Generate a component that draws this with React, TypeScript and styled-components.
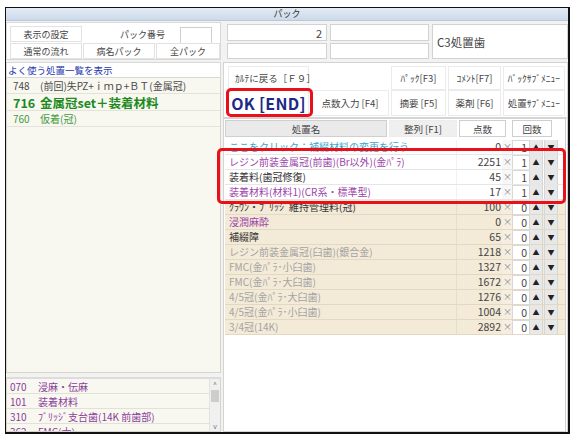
import styled, { createGlobalStyle } from 'styled-components';

const GlobalStyle = createGlobalStyle`
  html, body { margin: 0; padding: 0; background: #fff; }
  body {
    font-family: "Noto Sans CJK JP", "Noto Sans", sans-serif;
    font-size: 10px;
    color: #333;
  }
`;

const Page = styled.div`
  padding: 7px 0 0 5px;
`;

const Window = styled.div`
  position: relative;
  width: 562px;
  height: 424px;
  border: 1px solid #111;
  border-right-width: 2px;
  border-bottom-width: 2px;
  background: #f2f2f2;
  display: flex;
  flex-direction: column;
`;

const TitleBar = styled.div`
  height: 13px;
  background: linear-gradient(#e3ebf5, #cbd9e9);
  border-bottom: 1px solid #b8c8da;
  box-sizing: border-box;
  text-align: center;
  font-size: 9px;
  line-height: 12px;
  color: #333;
`;

const Body = styled.div`
  flex: 1;
  display: flex;
  gap: 2px;
  padding: 1px 0 0 0;
  min-height: 0;
`;

/* ---------- left pane ---------- */

const LeftPane = styled.div`
  width: 215px;
  display: flex;
  flex-direction: column;
`;

const SettingBox = styled.div`
  height: 38px;
  box-sizing: border-box;
  background: #fff;
  border: 1px solid #d8d8d8;
  padding: 3px 0 0 3px;
  display: flex;
  flex-direction: column;
  gap: 1px;
`;

const SettingRow = styled.div`
  display: flex;
  align-items: center;
  gap: 1px;
  height: 16px;
`;

const PlainButton = styled.div<{ $w?: number }>`
  width: ${p => (p.$w ? `${p.$w}px` : 'auto')};
  flex: ${p => (p.$w ? 'none' : '1')};
  height: 100%;
  box-sizing: border-box;
  border: 1px solid #e2e2e2;
  background: #fff;
  display: flex;
  align-items: center;
  justify-content: center;
  padding: 0 5px;
  font-size: 9px;
  color: #444;
  white-space: nowrap;
`;

const PackLabel = styled.div`
  flex: 1;
  text-align: right;
  padding-right: 14px;
  font-size: 9px;
  color: #444;
`;

const PackInput = styled.div`
  width: 32px;
  height: 17px;
  box-sizing: border-box;
  border: 1px solid #cfcfcf;
  margin-right: 8px;
  margin-top: 2px;
  background: #fff;
`;

const LinkBox = styled.div`
  height: 16px;
  margin-top: 2px;
  box-sizing: border-box;
  background: #fff;
  border: 1px solid #d8d8d8;
  padding-left: 1px;
  font-size: 9.5px;
  line-height: 14px;
  color: #2638b0;
`;

const FavList = styled.div`
  flex: 1;
  background: #f8f7f0;
  border: 1px solid #d6d5cc;
  border-top: none;
`;

const FavRow = styled.div<{ $kind: 'normal' | 'big' | 'green' }>`
  display: flex;
  align-items: center;
  height: ${p => (p.$kind === 'big' ? 16 : 15)}px;
  padding-left: 6px;
  border-bottom: 1px solid #e4e3da;
  white-space: nowrap;
  font-size: ${p => (p.$kind === 'big' ? '12.5px' : '10px')};
  font-weight: ${p => (p.$kind === 'big' ? 700 : 400)};
  color: ${p => (p.$kind === 'normal' ? '#4a4a4a' : p.$kind === 'big' ? '#1d8a1d' : '#3f9c3f')};
`;

const FavCode = styled.span`
  width: 27px;
  flex: none;
`;

const BottomList = styled.div`
  height: 55px;
  margin-top: 4px;
  box-sizing: border-box;
  background: #f8f7f0;
  border: 1px solid #d6d5cc;
  border-top: 2px solid #dcdcdc;
  display: flex;
  overflow: hidden;
`;

const BottomItems = styled.div`
  flex: 1;
`;

const BottomRow = styled.div`
  display: flex;
  align-items: center;
  height: 14px;
  padding-left: 3px;
  border-bottom: 1px solid #e2e1d8;
  font-size: 10px;
  color: #8b3d9c;
  white-space: nowrap;
`;

const BottomCode = styled.span`
  width: 28px;
  flex: none;
`;

const ScrollBar = styled.div`
  width: 10px;
  background: #f0f0f0;
  border-left: 1px solid #e2e2e2;
  display: flex;
  flex-direction: column;
  align-items: center;
  font-size: 7px;
  color: #777;
`;

const ScrollThumb = styled.div`
  width: 8px;
  height: 12px;
  background: #cdcdcd;
  margin-top: 1px;
`;

const ScrollSpacer = styled.div`
  flex: 1;
`;

/* ---------- right pane ---------- */

const RightPane = styled.div`
  flex: 1;
  display: flex;
  flex-direction: column;
  min-width: 0;
`;

const InfoGrid = styled.div`
  height: 38px;
  box-sizing: border-box;
  display: grid;
  grid-template-columns: 100px 99px 1fr;
  grid-template-rows: 17px 16px;
  gap: 2px 3px;
  padding: 2px 0 0 4px;
`;

const InfoCell = styled.div<{ $big?: boolean }>`
  background: #fff;
  border: 1px solid #d2d2d2;
  box-sizing: border-box;
  display: flex;
  align-items: center;
  justify-content: ${p => (p.$big ? 'flex-start' : 'flex-end')};
  padding: 0 4px;
  font-size: ${p => (p.$big ? '11.5px' : '11px')};
  color: #444;
  ${p => (p.$big ? 'grid-column: 3; grid-row: 1 / span 2;' : '')}
`;

const ButtonPanel = styled.div`
  height: 56px;
  margin-top: 2px;
  box-sizing: border-box;
  background: #fff;
  border: 1px solid #d4d4d4;
  padding: 3px 2px 1px 4px;
  display: grid;
  grid-template-columns: 81px 78px 55px 53px 1fr;
  grid-template-rows: 24px 26px;
  column-gap: 2px;
`;

const FuncButton = styled.div<{ $left?: boolean; $ok?: boolean }>`
  box-sizing: border-box;
  border: 1px solid #ebebeb;
  background: #fff;
  display: flex;
  align-items: center;
  justify-content: ${p => (p.$left ? 'flex-start' : 'center')};
  padding: 0 ${p => (p.$left ? '6px' : '0')};
  font-size: ${p => (p.$ok ? '16px' : '9.5px')};
  font-weight: ${p => (p.$ok ? 700 : 400)};
  color: ${p => (p.$ok ? '#1c2a84' : '#444')};
  white-space: nowrap;
  letter-spacing: ${p => (p.$ok ? '0.3px' : '0')};
`;

const TableArea = styled.div`
  flex: 1;
  background: #fff;
  border: 1px solid #d4d4d4;
  border-right: 3px double #cfcfcf;
  padding: 1px 0 0 1px;
`;

const HeaderRow = styled.div`
  display: grid;
  grid-template-columns: 162px 68px 47px 44px;
  column-gap: 2px;
  height: 17px;
  margin-bottom: 3px;
  & > div:nth-child(4) { margin-left: 4px; }
`;

const HeadCell = styled.div<{ $tone: 'gray' | 'plain' | 'white' }>`
  box-sizing: border-box;
  border: 1px solid ${p => (p.$tone === 'plain' ? '#ececec' : '#cfcfcf')};
  background: ${p => (p.$tone === 'white' ? '#fff' : p.$tone === 'gray' ? '#eaeaea' : '#efefef')};
  display: flex;
  align-items: center;
  justify-content: center;
  font-size: 9.5px;
  color: #444;
`;

const TRow = styled.div<{ $beige: boolean }>`
  display: grid;
  grid-template-columns: 232px 45px 10px 16px 15px 15px;
  height: 15px;
  box-sizing: border-box;
  border-bottom: 1px solid ${p => (p.$beige ? '#e3d9c2' : '#e6e6e6')};
  background: ${p => (p.$beige ? '#f3ead7' : '#fff')};
  white-space: nowrap;
`;

const NameCell = styled.div<{ $color: string }>`
  padding-left: 4px;
  font-size: 10px;
  line-height: 14px;
  color: ${p => p.$color};
  overflow: hidden;
  border-right: 1px solid rgba(0, 0, 0, 0.05);
`;

const ScoreCell = styled.div`
  text-align: right;
  font-size: 10.5px;
  line-height: 14px;
  color: #444;
  padding-right: 1px;
`;

const TimesCell = styled.div<{ $beige: boolean }>`
  font-size: 9px;
  line-height: 14px;
  color: #888;
  background: ${p => (p.$beige ? '#f6efe1' : '#f7f7f7')};
  padding-left: 1px;
`;

const CountCell = styled.div`
  background: #fff;
  border: 1px solid #d8d8d8;
  border-bottom: none;
  text-align: right;
  padding-right: 2px;
  font-size: 10.5px;
  line-height: 13px;
  color: #444;
  width: 18px;
  box-sizing: border-box;
`;

const ArrowBtn = styled.div`
  margin-left: 1px;
  background: #e8e8e8;
  border-left: 1px solid #d6d6d6;
  border-right: 1px solid #d6d6d6;
  display: flex;
  align-items: center;
  justify-content: center;
  font-size: 7px;
  color: #222;
`;

const Highlight = styled.div`
  position: absolute;
  border: 3px solid #e8111b;
  border-radius: 5px;
  pointer-events: none;
`;

type Kind = 'link' | 'purple' | 'dark' | 'gray';

const colorOf: Record<Kind, string> = {
  link: '#3aa6cc',
  purple: '#9c43aa',
  dark: '#333',
  gray: '#a3a3a3',
};

const rows: { name: string; score: number; count: number; kind: Kind; beige: boolean }[] = [
  { name: 'ここをクリック：補綴材料の変更を行う', score: 0, count: 1, kind: 'link', beige: false },
  { name: 'レジン前装金属冠(前歯)(Br以外)(金ﾊﾟﾗ)', score: 2251, count: 1, kind: 'purple', beige: false },
  { name: '装着料(歯冠修復)', score: 45, count: 1, kind: 'dark', beige: false },
  { name: '装着材料(材料1)(CR系・標準型)', score: 17, count: 1, kind: 'purple', beige: false },
  { name: 'ｸﾗｳﾝ・ﾌﾞﾘｯｼﾞ維持管理料(冠)', score: 100, count: 0, kind: 'dark', beige: true },
  { name: '浸潤麻酔', score: 0, count: 0, kind: 'purple', beige: true },
  { name: '補綴障', score: 65, count: 0, kind: 'dark', beige: true },
  { name: 'レジン前装金属冠(臼歯)(銀合金)', score: 1218, count: 0, kind: 'gray', beige: true },
  { name: 'FMC(金ﾊﾟﾗ･小臼歯)', score: 1327, count: 0, kind: 'gray', beige: true },
  { name: 'FMC(金ﾊﾟﾗ･大臼歯)', score: 1672, count: 0, kind: 'gray', beige: true },
  { name: '4/5冠(金ﾊﾟﾗ･大臼歯)', score: 1276, count: 0, kind: 'gray', beige: true },
  { name: '4/5冠(金ﾊﾟﾗ･小臼歯)', score: 1004, count: 0, kind: 'gray', beige: true },
  { name: '3/4冠(14K)', score: 2892, count: 0, kind: 'gray', beige: true },
];

const bottomItems = [
  ['070', '浸麻・伝麻'],
  ['101', '装着材料'],
  ['310', 'ﾌﾞﾘｯｼﾞ支台歯(14K 前歯部)'],
  ['362', 'FMC(大)'],
];

export default function App() {
  return (
    <Page>
      <GlobalStyle />
      <Window>
        <TitleBar>パック</TitleBar>
        <Body>
          <LeftPane>
            <SettingBox>
              <SettingRow>
                <PlainButton $w={72}>表示の設定</PlainButton>
                <PackLabel>パック番号</PackLabel>
                <PackInput />
              </SettingRow>
              <SettingRow>
                <PlainButton $w={72}>通常の流れ</PlainButton>
                <PlainButton $w={72}>病名パック</PlainButton>
                <PlainButton>全パック</PlainButton>
              </SettingRow>
            </SettingBox>
            <LinkBox>よく使う処置一覧を表示</LinkBox>
            <FavList>
              <FavRow $kind="normal">
                <FavCode>748</FavCode>(前回)失PZ+ｉｍｐ+ＢＴ(金属冠)
              </FavRow>
              <FavRow $kind="big">
                <FavCode>716</FavCode>金属冠set＋装着材料
              </FavRow>
              <FavRow $kind="green">
                <FavCode>760</FavCode>仮着(冠)
              </FavRow>
            </FavList>
            <BottomList>
              <BottomItems>
                {bottomItems.map(([code, name]) => (
                  <BottomRow key={code}>
                    <BottomCode>{code}</BottomCode>
                    {name}
                  </BottomRow>
                ))}
              </BottomItems>
              <ScrollBar>
                <span>^</span>
                <ScrollThumb />
                <ScrollSpacer />
                <span>v</span>
              </ScrollBar>
            </BottomList>
          </LeftPane>

          <RightPane>
            <InfoGrid>
              <InfoCell>2</InfoCell>
              <InfoCell />
              <InfoCell $big>C3処置歯</InfoCell>
              <InfoCell />
              <InfoCell />
            </InfoGrid>
            <ButtonPanel>
              <FuncButton $left>ｶﾙﾃに戻る［Ｆ９］</FuncButton>
              <div />
              <FuncButton>ﾊﾟｯｸ[F3]</FuncButton>
              <FuncButton>ｺﾒﾝﾄ[F7]</FuncButton>
              <FuncButton>ﾊﾞｯｸｻﾌﾞﾒﾆｭｰ</FuncButton>
              <FuncButton $ok>OK [END]</FuncButton>
              <FuncButton>点数入力 [F4]</FuncButton>
              <FuncButton>摘要 [F5]</FuncButton>
              <FuncButton>薬剤 [F6]</FuncButton>
              <FuncButton>処置ｻﾌﾞﾒﾆｭｰ</FuncButton>
            </ButtonPanel>
            <TableArea>
              <HeaderRow>
                <HeadCell $tone="gray">処置名</HeadCell>
                <HeadCell $tone="plain">整列 [F1]</HeadCell>
                <HeadCell $tone="white">点数</HeadCell>
                <HeadCell $tone="white">回数</HeadCell>
              </HeaderRow>
              {rows.map(r => (
                <TRow key={r.name} $beige={r.beige}>
                  <NameCell $color={colorOf[r.kind]}>{r.name}</NameCell>
                  <ScoreCell>{r.score}</ScoreCell>
                  <TimesCell $beige={r.beige}>×</TimesCell>
                  <CountCell>{r.count}</CountCell>
                  <ArrowBtn>▲</ArrowBtn>
                  <ArrowBtn>▼</ArrowBtn>
                </TRow>
              ))}
            </TableArea>
          </RightPane>
        </Body>

        <Highlight style={{ left: 220, top: 80, width: 81, height: 23 }} />
        <Highlight style={{ left: 211, top: 140, width: 343, height: 50 }} />
      </Window>
    </Page>
  );
}
